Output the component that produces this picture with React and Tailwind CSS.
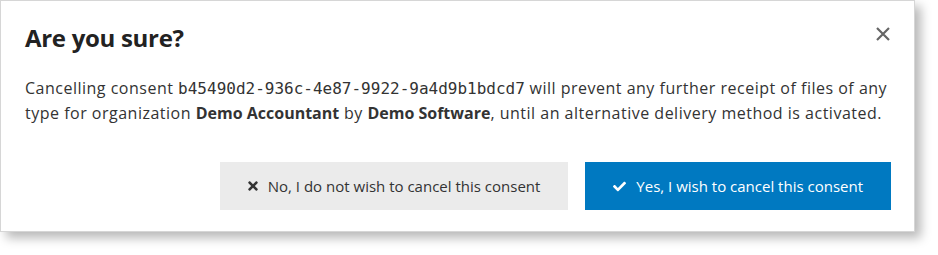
import { FaTimes, FaCheck } from 'react-icons/fa';

export default function App() {
  return (
    <div className="w-[938px] h-[255px] bg-white font-['Open_Sans',sans-serif]">
      {/* Dialog card */}
      <div className="w-[915px] h-[232px] bg-white border border-[#d6d6d6] shadow-[6px_6px_10px_rgba(0,0,0,0.28)] pl-6 pr-[23px] pt-[21px] flex flex-col">
        {/* Header */}
        <div className="flex items-center justify-between">
          <h2 className="text-[24px] leading-8 font-bold text-[#222] tracking-[-0.3px]">Are you sure?</h2>
          <button className="text-[#666] -mt-2">
            <svg width="16" height="16" viewBox="0 0 16 16" fill="none" stroke="currentColor" strokeWidth="2.2">
              <path d="M2 2 L14 14 M14 2 L2 14" />
            </svg>
          </button>
        </div>

        {/* Body */}
        <p className="mt-[22px] text-[16px] leading-[25px] text-[#333] tracking-[0.5px]">
          Cancelling consent{' '}
          <span className="font-['DejaVu_Sans_Mono',monospace] tracking-normal">b45490d2-936c-4e87-9922-9a4d9b1bdcd7</span>{' '}
          will prevent any further receipt of files of any type for organization{' '}
          <span className="font-bold tracking-normal">Demo Accountant</span> by{' '}
          <span className="font-bold tracking-normal">Demo Software</span>, until an alternative delivery method is activated.
        </p>

        {/* Footer buttons */}
        <div className="mt-auto mb-[21px] flex justify-end gap-[17px]">
          <button className="h-12 px-7 bg-[#ebebeb] text-[#333] text-[15px] flex items-center gap-[10px]">
            <FaTimes className="w-[10px] h-[14px]" />
            No, I do not wish to cancel this consent
          </button>
          <button className="h-12 px-7 bg-[#0079c1] text-white text-[15px] font-medium flex items-center gap-[10px]">
            <FaCheck className="w-[13px] h-[13px]" />
            Yes, I wish to cancel this consent
          </button>
        </div>
      </div>
    </div>
  );
}
